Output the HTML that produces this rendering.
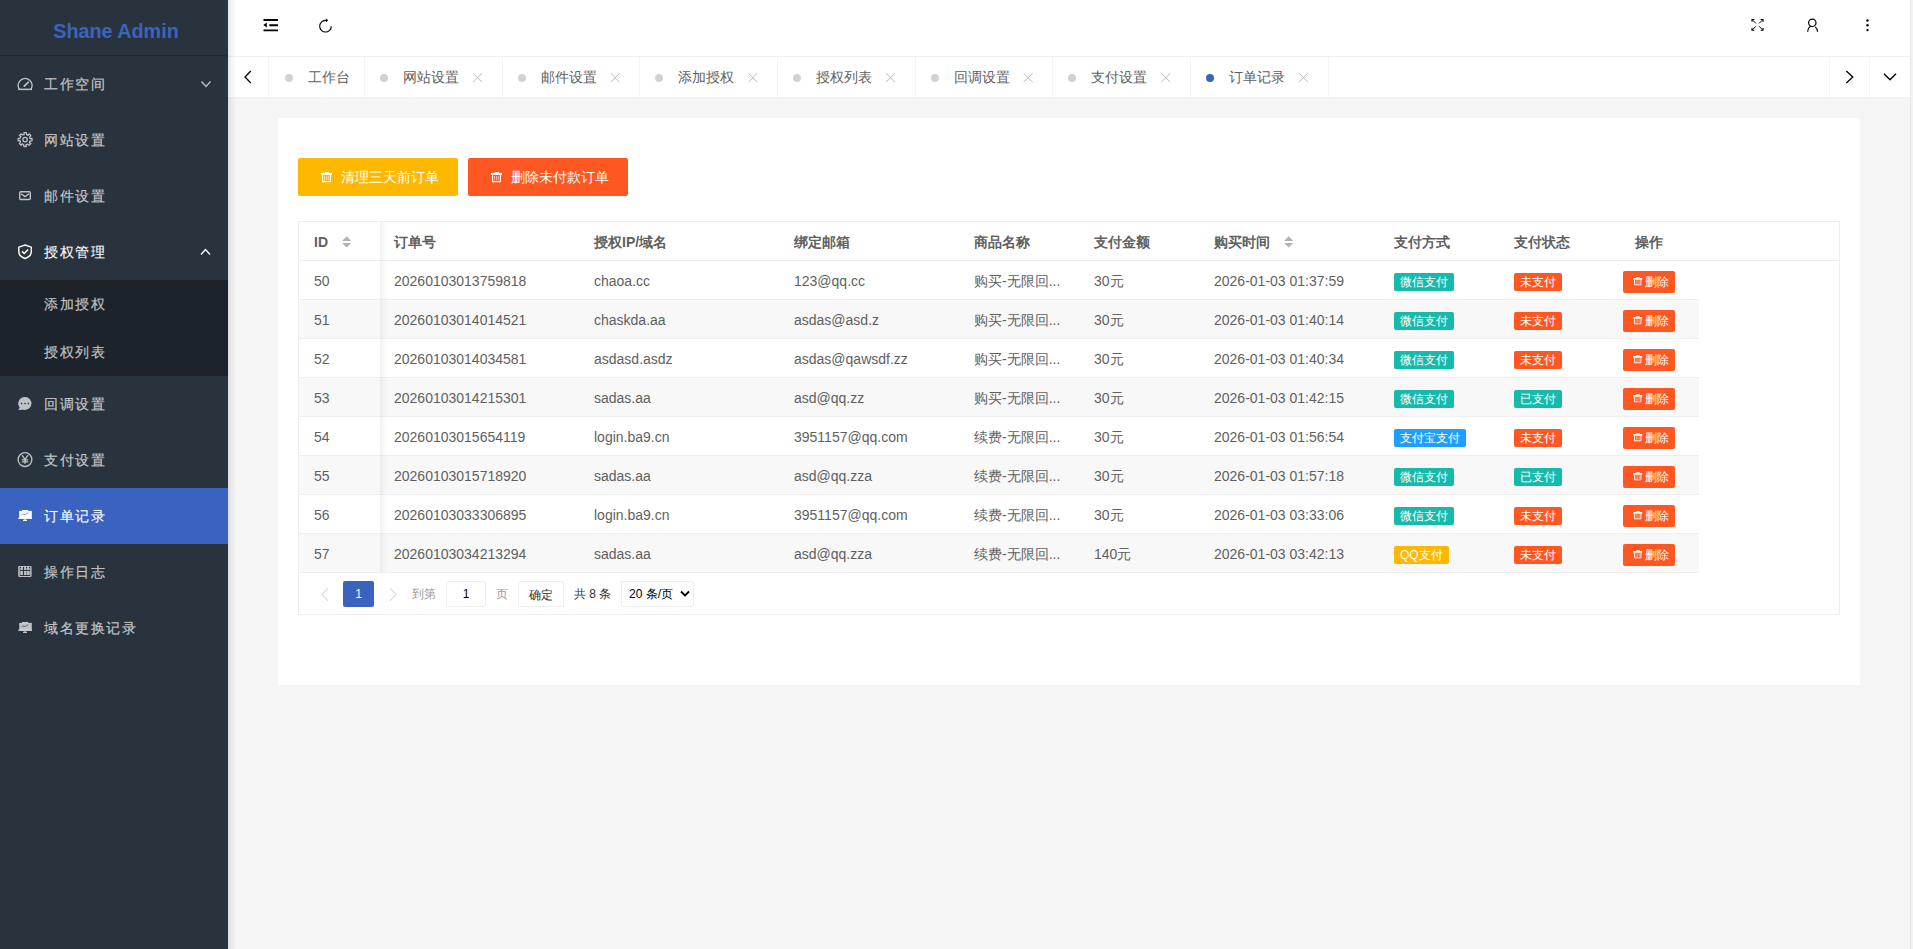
<!DOCTYPE html>
<html><head><meta charset="utf-8"><style>
*{box-sizing:border-box;margin:0;padding:0}
html,body{width:1913px;height:949px;overflow:hidden;background:#f5f5f5;font-family:"Liberation Sans",sans-serif;font-size:14px;color:#5f5f5f}
div,span{position:absolute;white-space:nowrap}
#side{left:0;top:0;width:228px;height:949px;background:#28333e}
#sshadow{left:228px;top:0;width:8px;height:949px;background:linear-gradient(to right,rgba(0,15,40,.10),rgba(0,15,40,.05) 40%,rgba(0,0,0,0));z-index:5}
#logo{left:2px;top:0;width:228px;height:56px;color:#3d63bf;font-weight:bold;font-size:21px;text-align:center;line-height:61px;transform:scaleX(.94)}
#logob{left:0;top:55px;width:228px;height:1px;background:#222b34}
.nav{left:0;width:228px;height:56px;color:rgba(255,255,255,.7);font-size:13.5px;letter-spacing:1.5px;line-height:58px;-webkit-text-stroke:.25px rgba(255,255,255,.45)}
.nav span{left:44px;top:0}
.sub{left:0;top:280px;width:228px;height:96px;background:#1c232a}
.sub div{left:44px;height:48px;line-height:50px;color:rgba(255,255,255,.7);font-size:13.5px;letter-spacing:1.5px;-webkit-text-stroke:.25px rgba(255,255,255,.45)}
#head{left:228px;top:0;width:1685px;height:57px;background:#fff;border-bottom:1px solid #f0f0f0}
#tabs{left:228px;top:57px;width:1685px;height:41px;background:#fff;border-bottom:1px solid #f0f0f0}
.tb{top:57px;width:1px;height:40px;background:#f4f4f4}
.tt{top:57px;line-height:41px;font-size:14px;color:#5f5f5f}
.dot{top:74px;width:8px;height:8px;border-radius:50%;background:#d2d2d2}
#card{left:278px;top:118px;width:1582px;height:567px;background:#fff}
.btn{top:158px;height:38px;width:160px;line-height:38px;color:#fff;font-size:14px;border-radius:2px}
.btn span{left:43px;top:0}
#tbl{left:298px;top:221px;width:1542px;height:394px;border:1px solid #eee;background:#fff}
.row{left:299px;width:1400px;height:39px;border-bottom:1px solid #eee}
.even{background:#f8f8f8}
.hb{left:299px;top:260px;width:1540px;height:1px;background:#eee}
.hd{top:223px;line-height:38px;font-weight:bold;color:#5f5f5f}
.c{top:0;line-height:40px}
.badge{top:12px;height:18px;line-height:18px;font-size:12px;color:#fff;border-radius:2px;padding:0 6px}
.del{top:10px;left:1324px;height:22px;width:52px;line-height:22px;font-size:12px;color:#fff;background:#ff5722;border-radius:2px}
.del span{left:22px;top:0}
#fshadow{left:380px;top:222px;width:7px;height:350px;background:linear-gradient(to right,rgba(0,0,0,.05),rgba(0,0,0,0));z-index:3}
.pg{font-size:12px;top:581px;line-height:26px}
#ov{left:0;top:0;z-index:10}
</style></head><body>
<div id="side"></div><div id="sshadow"></div>
<div id="logo">Shane Admin</div><div id="logob"></div>
<div class="nav" style="top:56px;color:rgba(255,255,255,.7)"><span>工作空间</span></div>
<div class="nav" style="top:112px;color:rgba(255,255,255,.7)"><span>网站设置</span></div>
<div class="nav" style="top:168px;color:rgba(255,255,255,.7)"><span>邮件设置</span></div>
<div class="nav" style="top:224px;color:#fff"><span>授权管理</span></div>
<div class="nav" style="top:376px;color:rgba(255,255,255,.7)"><span>回调设置</span></div>
<div class="nav" style="top:432px;color:rgba(255,255,255,.7)"><span>支付设置</span></div>
<div class="nav" style="top:488px;background:#3a62bf;color:#fff"><span>订单记录</span></div>
<div class="nav" style="top:544px;color:rgba(255,255,255,.7)"><span>操作日志</span></div>
<div class="nav" style="top:600px;color:rgba(255,255,255,.7)"><span>域名更换记录</span></div>
<div class="sub"><div style="top:0">添加授权</div><div style="top:48px">授权列表</div></div>
<div id="head"></div><div id="tabs"></div>
<div class="tb" style="left:268px"></div>
<div class="tb" style="left:364px"></div>
<div class="tb" style="left:502px"></div>
<div class="tb" style="left:639px"></div>
<div class="tb" style="left:777px"></div>
<div class="tb" style="left:915px"></div>
<div class="tb" style="left:1052px"></div>
<div class="tb" style="left:1190px"></div>
<div class="tb" style="left:1328px"></div>
<div class="tb" style="left:1829px"></div>
<div class="tb" style="left:1869px"></div>
<div class="dot" style="left:284.5px"></div>
<span class="tt" style="left:308px">工作台</span>
<div class="dot" style="left:380.00px;background:#d2d2d2"></div>
<span class="tt" style="left:403.10px">网站设置</span>
<div class="dot" style="left:517.65px;background:#d2d2d2"></div>
<span class="tt" style="left:540.75px">邮件设置</span>
<div class="dot" style="left:655.30px;background:#d2d2d2"></div>
<span class="tt" style="left:678.40px">添加授权</span>
<div class="dot" style="left:792.95px;background:#d2d2d2"></div>
<span class="tt" style="left:816.05px">授权列表</span>
<div class="dot" style="left:930.60px;background:#d2d2d2"></div>
<span class="tt" style="left:953.70px">回调设置</span>
<div class="dot" style="left:1068.25px;background:#d2d2d2"></div>
<span class="tt" style="left:1091.35px">支付设置</span>
<div class="dot" style="left:1205.90px;background:#3a62bf"></div>
<span class="tt" style="left:1229.00px">订单记录</span>
<div id="card"></div>
<div class="btn" style="left:298px;background:#ffb800"><span>清理三天前订单</span></div>
<div class="btn" style="left:468px;background:#ff5722"><span>删除未付款订单</span></div>
<div id="tbl"></div>
<span class="hd" style="left:314px">ID</span>
<span class="hd" style="left:394px">订单号</span>
<span class="hd" style="left:594px">授权IP/域名</span>
<span class="hd" style="left:794px">绑定邮箱</span>
<span class="hd" style="left:974px">商品名称</span>
<span class="hd" style="left:1094px">支付金额</span>
<span class="hd" style="left:1214px">购买时间</span>
<span class="hd" style="left:1394px">支付方式</span>
<span class="hd" style="left:1514px">支付状态</span>
<span class="hd" style="left:1635px">操作</span>
<div class="hb"></div>
<div class="row" style="top:261px">
<span class="c" style="left:15px">50</span>
<span class="c" style="left:95px">20260103013759818</span>
<span class="c" style="left:295px">chaoa.cc</span>
<span class="c" style="left:495px">123@qq.cc</span>
<span class="c" style="left:675px">购买-无限回...</span>
<span class="c" style="left:795px">30元</span>
<span class="c" style="left:915px">2026-01-03 01:37:59</span>
<span class="badge" style="left:1095px;background:#16baaa">微信支付</span>
<span class="badge" style="left:1215px;background:#ff5722">未支付</span>
<span class="del"><span>删除</span></span>
</div>
<div class="row even" style="top:300px">
<span class="c" style="left:15px">51</span>
<span class="c" style="left:95px">20260103014014521</span>
<span class="c" style="left:295px">chaskda.aa</span>
<span class="c" style="left:495px">asdas@asd.z</span>
<span class="c" style="left:675px">购买-无限回...</span>
<span class="c" style="left:795px">30元</span>
<span class="c" style="left:915px">2026-01-03 01:40:14</span>
<span class="badge" style="left:1095px;background:#16baaa">微信支付</span>
<span class="badge" style="left:1215px;background:#ff5722">未支付</span>
<span class="del"><span>删除</span></span>
</div>
<div class="row" style="top:339px">
<span class="c" style="left:15px">52</span>
<span class="c" style="left:95px">20260103014034581</span>
<span class="c" style="left:295px">asdasd.asdz</span>
<span class="c" style="left:495px">asdas@qawsdf.zz</span>
<span class="c" style="left:675px">购买-无限回...</span>
<span class="c" style="left:795px">30元</span>
<span class="c" style="left:915px">2026-01-03 01:40:34</span>
<span class="badge" style="left:1095px;background:#16baaa">微信支付</span>
<span class="badge" style="left:1215px;background:#ff5722">未支付</span>
<span class="del"><span>删除</span></span>
</div>
<div class="row even" style="top:378px">
<span class="c" style="left:15px">53</span>
<span class="c" style="left:95px">20260103014215301</span>
<span class="c" style="left:295px">sadas.aa</span>
<span class="c" style="left:495px">asd@qq.zz</span>
<span class="c" style="left:675px">购买-无限回...</span>
<span class="c" style="left:795px">30元</span>
<span class="c" style="left:915px">2026-01-03 01:42:15</span>
<span class="badge" style="left:1095px;background:#16baaa">微信支付</span>
<span class="badge" style="left:1215px;background:#16baaa">已支付</span>
<span class="del"><span>删除</span></span>
</div>
<div class="row" style="top:417px">
<span class="c" style="left:15px">54</span>
<span class="c" style="left:95px">20260103015654119</span>
<span class="c" style="left:295px">login.ba9.cn</span>
<span class="c" style="left:495px">3951157@qq.com</span>
<span class="c" style="left:675px">续费-无限回...</span>
<span class="c" style="left:795px">30元</span>
<span class="c" style="left:915px">2026-01-03 01:56:54</span>
<span class="badge" style="left:1095px;background:#1e9fff">支付宝支付</span>
<span class="badge" style="left:1215px;background:#ff5722">未支付</span>
<span class="del"><span>删除</span></span>
</div>
<div class="row even" style="top:456px">
<span class="c" style="left:15px">55</span>
<span class="c" style="left:95px">20260103015718920</span>
<span class="c" style="left:295px">sadas.aa</span>
<span class="c" style="left:495px">asd@qq.zza</span>
<span class="c" style="left:675px">续费-无限回...</span>
<span class="c" style="left:795px">30元</span>
<span class="c" style="left:915px">2026-01-03 01:57:18</span>
<span class="badge" style="left:1095px;background:#16baaa">微信支付</span>
<span class="badge" style="left:1215px;background:#16baaa">已支付</span>
<span class="del"><span>删除</span></span>
</div>
<div class="row" style="top:495px">
<span class="c" style="left:15px">56</span>
<span class="c" style="left:95px">20260103033306895</span>
<span class="c" style="left:295px">login.ba9.cn</span>
<span class="c" style="left:495px">3951157@qq.com</span>
<span class="c" style="left:675px">续费-无限回...</span>
<span class="c" style="left:795px">30元</span>
<span class="c" style="left:915px">2026-01-03 03:33:06</span>
<span class="badge" style="left:1095px;background:#16baaa">微信支付</span>
<span class="badge" style="left:1215px;background:#ff5722">未支付</span>
<span class="del"><span>删除</span></span>
</div>
<div class="row even" style="top:534px">
<span class="c" style="left:15px">57</span>
<span class="c" style="left:95px">20260103034213294</span>
<span class="c" style="left:295px">sadas.aa</span>
<span class="c" style="left:495px">asd@qq.zza</span>
<span class="c" style="left:675px">续费-无限回...</span>
<span class="c" style="left:795px">140元</span>
<span class="c" style="left:915px">2026-01-03 03:42:13</span>
<span class="badge" style="left:1095px;background:#ffb800">QQ支付</span>
<span class="badge" style="left:1215px;background:#ff5722">未支付</span>
<span class="del"><span>删除</span></span>
</div>
<div id="fshadow"></div>
<div style="left:343px;top:581px;width:31px;height:26px;background:#3a62bf;border-radius:2px;color:#fff;font-size:12px;text-align:center;line-height:26px">1</div>
<span class="pg" style="left:412px;color:#999">到第</span>
<div style="left:446px;top:581px;width:40px;height:26px;border:1px solid #eee;border-radius:2px;font-size:12px;text-align:center;line-height:24px;color:#000">1</div>
<span class="pg" style="left:496px;color:#999">页</span>
<div style="left:518px;top:581px;width:46px;height:26px;border:1px solid #eee;border-radius:2px;font-size:12px;text-align:center;line-height:26px;color:#333">确定</div>
<span class="pg" style="left:574px;color:#333">共 8 条</span>
<div style="left:621px;top:581px;width:73px;height:26px;border:1px solid #eee;border-radius:2px;font-size:12px;line-height:24px;color:#000;padding-left:7px">20 条/页</div>
<div style="left:1910px;top:0;width:1px;height:949px;background:#e8e8e8;z-index:12"></div><div style="left:1911px;top:0;width:2px;height:949px;background:#f3f3f3;z-index:12"></div>
<svg id="ov" width="1913" height="949" style="position:absolute;left:0;top:0;z-index:10"><path d="M19.3 89.2 A6.9 6.9 0 1 1 30.9 89.2" fill="none" stroke="rgba(255,255,255,.7)" stroke-width="1.5" /><path d="M18.2 88.6h13.8v1.5h-13.8z" fill="rgba(255,255,255,.7)" /><path d="M24.3 86.2L28.2 82.3" fill="none" stroke="rgba(255,255,255,.7)" stroke-width="1.7" stroke-linecap="round"/><path d="M23.92 132.70 L26.28 132.70 L26.64 134.63 L28.12 135.37 L29.14 133.88 L30.82 135.56 L29.70 137.17 L30.23 138.74 L32.00 138.42 L32.00 140.78 L30.07 141.14 L29.33 142.62 L30.82 143.64 L29.14 145.32 L27.53 144.20 L25.96 144.73 L26.28 146.50 L23.92 146.50 L23.56 144.57 L22.08 143.83 L21.06 145.32 L19.38 143.64 L20.50 142.03 L19.97 140.46 L18.20 140.78 L18.20 138.42 L20.13 138.06 L20.87 136.58 L19.38 135.56 L21.06 133.88 L22.67 135.00 L24.24 134.47Z" fill="none" stroke="rgba(255,255,255,.7)" stroke-width="1.3" stroke-linejoin="round"/><circle cx="25.1" cy="139.6" r="2.2" fill="none" stroke="rgba(255,255,255,.7)" stroke-width="1.3"/><rect x="19.7" y="191.7" width="10.6" height="7.8" rx="1" fill="none" stroke="rgba(255,255,255,.7)" stroke-width="1.4"/><path d="M21 193.7L25 196.6L29 193.7" fill="none" stroke="rgba(255,255,255,.7)" stroke-width="1.3" /><path d="M25.05 245L31.3 247.2V251.6C31.3 255 28.6 257.4 25.05 258.5C21.5 257.4 18.8 255 18.8 251.6V247.2z" fill="none" stroke="#fff" stroke-width="1.4" /><path d="M22 251.4L24.2 253.5L28.2 249.4" fill="none" stroke="#fff" stroke-width="1.5" /><path d="M25 397.1A6.6 6.4 0 1 1 23.2 409.7L18.2 410.1L19.8 407.6A6.6 6.4 0 0 1 25 397.1z" fill="rgba(255,255,255,.7)" /><circle cx="21.6" cy="403.6" r=".8" fill="#28333e"/><circle cx="25" cy="403.6" r=".8" fill="#28333e"/><circle cx="28.4" cy="403.6" r=".8" fill="#28333e"/><circle cx="25" cy="459.6" r="6.9" fill="none" stroke="rgba(255,255,255,.7)" stroke-width="1.3"/><path d="M22 455.2L25 459.4L28 455.2 M25 459.4V463.8 M21.8 459.8H28.2 M21.8 461.8H28.2" fill="none" stroke="rgba(255,255,255,.7)" stroke-width="1.3" /><path d="M22 510.0h6.2v1.2H22z" fill="#fff" /><path d="M19.2 510.9h12.6v7.6H19.2z" fill="#fff" /><path d="M18.1 517.6999999999999h13.9v1.1H18.1z" fill="#fff" /><path d="M24.4 518.6999999999999h1.2v1.2h-1.2z M23 519.6999999999999h4v1.2h-4z" fill="#fff" /><path d="M21.5 514.9L23 514.1L25 514.5L27 513.3L28.5 512.6999999999999" fill="none" stroke="#3a62bf" stroke-width="0.6" /><path d="M22 622.0h6.2v1.2H22z" fill="rgba(255,255,255,.7)" /><path d="M19.2 622.9h12.6v7.6H19.2z" fill="rgba(255,255,255,.7)" /><path d="M18.1 629.6999999999999h13.9v1.1H18.1z" fill="rgba(255,255,255,.7)" /><path d="M24.4 630.6999999999999h1.2v1.2h-1.2z M23 631.6999999999999h4v1.2h-4z" fill="rgba(255,255,255,.7)" /><path d="M21.5 626.9L23 626.1L25 626.5L27 625.3L28.5 624.6999999999999" fill="none" stroke="#28333e" stroke-width="0.6" /><rect x="18.2" y="565.9" width="13.4" height="11" rx="1.2" fill="rgba(255,255,255,.7)"/><path d="M23.5 567.2V575.9" fill="none" stroke="#28333e" stroke-width="1.1" /><path d="M20.1 567.4V575.2 M26.6 567.4V575.2 M29.8 567.4V575.2" fill="none" stroke="#28333e" stroke-width="0.8" opacity=".55"/><path d="M19.8 570.4H30.2 M19.8 575.5H30.2" fill="none" stroke="#28333e" stroke-width="1.0" /><circle cx="20.4" cy="567.5" r=".65" fill="#28333e"/><circle cx="23.5" cy="567.5" r=".65" fill="#28333e"/><circle cx="26.6" cy="567.5" r=".65" fill="#28333e"/><circle cx="29.6" cy="567.5" r=".65" fill="#28333e"/><path d="M201.5 81.5L206 86.5L210.5 81.5" fill="none" stroke="rgba(255,255,255,.7)" stroke-width="1.3" /><path d="M201 254.5L205.5 249.5L210 254.5" fill="none" stroke="#fff" stroke-width="1.3" /><path d="M263.5 20h14.5 M269.3 25.2h8.7 M263.5 30.4h14.5" fill="none" stroke="#000" stroke-width="1.9" /><path d="M263.3 25L266.8 22.6V27.4z" fill="#000" /><path d="M331.3 26.2A5.8 5.8 0 1 1 325.5 20.4L326.3 20.4" fill="none" stroke="#000" stroke-width="1.1" /><path d="M325.9 18.4L328.2 20.3L325.9 22.2z" fill="#000" /><path d="M1755.9 23.4L1752.3 19.8" fill="none" stroke="#000" stroke-width="1.0" /><path d="M1752 21.8V19.5H1754.3" fill="none" stroke="#000" stroke-width="1.1" /><path d="M1759.1 23.4L1762.7 19.8" fill="none" stroke="#000" stroke-width="1.0" /><path d="M1763 21.8V19.5H1760.7" fill="none" stroke="#000" stroke-width="1.1" /><path d="M1755.9 26.3L1752.3 29.9" fill="none" stroke="#000" stroke-width="1.0" /><path d="M1752 27.9V30.2H1754.3" fill="none" stroke="#000" stroke-width="1.1" /><path d="M1759.1 26.3L1762.7 29.9" fill="none" stroke="#000" stroke-width="1.0" /><path d="M1763 27.9V30.2H1760.7" fill="none" stroke="#000" stroke-width="1.1" /><circle cx="1812.3" cy="22.8" r="3.7" fill="none" stroke="#000" stroke-width="1.2"/><path d="M1807.6 31.8Q1807.9 28 1810.6 26" fill="none" stroke="#000" stroke-width="1.2" /><path d="M1815.2 26.9Q1817.4 28.6 1817.6 31.8" fill="none" stroke="#000" stroke-width="1.2" /><circle cx="1867.5" cy="20.5" r="1.2" fill="#000"/><circle cx="1867.5" cy="25.3" r="1.2" fill="#000"/><circle cx="1867.5" cy="30.1" r="1.2" fill="#000"/><path d="M250.8 71L245 77L250.8 83" fill="none" stroke="#000" stroke-width="1.3" /><path d="M1846.3 71L1852.8 77L1846.3 83" fill="none" stroke="#000" stroke-width="1.3" /><path d="M1884 73.8L1890 79.8L1896 73.8" fill="none" stroke="#000" stroke-width="1.3" /><path d="M473.05 73.2L482.05 82.2 M482.05 73.2L473.05 82.2" fill="none" stroke="#b8b8b8" stroke-width="1" /><path d="M610.70 73.2L619.70 82.2 M619.70 73.2L610.70 82.2" fill="none" stroke="#b8b8b8" stroke-width="1" /><path d="M748.35 73.2L757.35 82.2 M757.35 73.2L748.35 82.2" fill="none" stroke="#b8b8b8" stroke-width="1" /><path d="M886.00 73.2L895.00 82.2 M895.00 73.2L886.00 82.2" fill="none" stroke="#b8b8b8" stroke-width="1" /><path d="M1023.65 73.2L1032.65 82.2 M1032.65 73.2L1023.65 82.2" fill="none" stroke="#b8b8b8" stroke-width="1" /><path d="M1161.30 73.2L1170.30 82.2 M1170.30 73.2L1161.30 82.2" fill="none" stroke="#b8b8b8" stroke-width="1" /><path d="M1298.95 73.2L1307.95 82.2 M1307.95 73.2L1298.95 82.2" fill="none" stroke="#b8b8b8" stroke-width="1" /><path d="M321 172.89999999999998h11.0v2.1h-11.0z" fill="#fff" /><path d="M324.8 172.1h4.2v1.0h-4.2z" fill="#fff" /><path d="M322.6 175.0V181.6H330.4V175.0" fill="none" stroke="#fff" stroke-width="1.1" /><path d="M324.6 176.0V180.39999999999998 M326.5 176.0V180.39999999999998 M328.4 176.0V180.39999999999998" fill="none" stroke="#fff" stroke-width="0.7" opacity=".75"/><path d="M491 172.89999999999998h11.0v2.1h-11.0z" fill="#fff" /><path d="M494.8 172.1h4.2v1.0h-4.2z" fill="#fff" /><path d="M492.6 175.0V181.6H500.4V175.0" fill="none" stroke="#fff" stroke-width="1.1" /><path d="M494.6 176.0V180.39999999999998 M496.5 176.0V180.39999999999998 M498.4 176.0V180.39999999999998" fill="none" stroke="#fff" stroke-width="0.7" opacity=".75"/><path d="M346.7 236.3L351.3 240.9H342.1z M346.7 247.6L351.3 243.1H342.1z" fill="#b2b2b2" /><path d="M1288.7 236.3L1293.3 240.9H1284.1z M1288.7 247.6L1293.3 243.1H1284.1z" fill="#b2b2b2" /><path d="M1633.2 278.0h9.02v1.722h-9.02z" fill="#fff" /><path d="M1636.316 277.2h3.444v0.82h-3.444z" fill="#fff" /><path d="M1634.512 279.416V284.82800000000003H1640.9080000000001V279.416" fill="none" stroke="#fff" stroke-width="0.902" /><path d="M1636.152 280.236V283.844 M1637.71 280.236V283.844 M1639.268 280.236V283.844" fill="none" stroke="#fff" stroke-width="0.574" opacity=".75"/><path d="M1633.2 317.0h9.02v1.722h-9.02z" fill="#fff" /><path d="M1636.316 316.2h3.444v0.82h-3.444z" fill="#fff" /><path d="M1634.512 318.416V323.82800000000003H1640.9080000000001V318.416" fill="none" stroke="#fff" stroke-width="0.902" /><path d="M1636.152 319.236V322.844 M1637.71 319.236V322.844 M1639.268 319.236V322.844" fill="none" stroke="#fff" stroke-width="0.574" opacity=".75"/><path d="M1633.2 356.0h9.02v1.722h-9.02z" fill="#fff" /><path d="M1636.316 355.2h3.444v0.82h-3.444z" fill="#fff" /><path d="M1634.512 357.416V362.82800000000003H1640.9080000000001V357.416" fill="none" stroke="#fff" stroke-width="0.902" /><path d="M1636.152 358.236V361.844 M1637.71 358.236V361.844 M1639.268 358.236V361.844" fill="none" stroke="#fff" stroke-width="0.574" opacity=".75"/><path d="M1633.2 395.0h9.02v1.722h-9.02z" fill="#fff" /><path d="M1636.316 394.2h3.444v0.82h-3.444z" fill="#fff" /><path d="M1634.512 396.416V401.82800000000003H1640.9080000000001V396.416" fill="none" stroke="#fff" stroke-width="0.902" /><path d="M1636.152 397.236V400.844 M1637.71 397.236V400.844 M1639.268 397.236V400.844" fill="none" stroke="#fff" stroke-width="0.574" opacity=".75"/><path d="M1633.2 434.0h9.02v1.722h-9.02z" fill="#fff" /><path d="M1636.316 433.2h3.444v0.82h-3.444z" fill="#fff" /><path d="M1634.512 435.416V440.82800000000003H1640.9080000000001V435.416" fill="none" stroke="#fff" stroke-width="0.902" /><path d="M1636.152 436.236V439.844 M1637.71 436.236V439.844 M1639.268 436.236V439.844" fill="none" stroke="#fff" stroke-width="0.574" opacity=".75"/><path d="M1633.2 473.0h9.02v1.722h-9.02z" fill="#fff" /><path d="M1636.316 472.2h3.444v0.82h-3.444z" fill="#fff" /><path d="M1634.512 474.416V479.82800000000003H1640.9080000000001V474.416" fill="none" stroke="#fff" stroke-width="0.902" /><path d="M1636.152 475.236V478.844 M1637.71 475.236V478.844 M1639.268 475.236V478.844" fill="none" stroke="#fff" stroke-width="0.574" opacity=".75"/><path d="M1633.2 512.0h9.02v1.722h-9.02z" fill="#fff" /><path d="M1636.316 511.2h3.444v0.82h-3.444z" fill="#fff" /><path d="M1634.512 513.416V518.828H1640.9080000000001V513.416" fill="none" stroke="#fff" stroke-width="0.902" /><path d="M1636.152 514.236V517.844 M1637.71 514.236V517.844 M1639.268 514.236V517.844" fill="none" stroke="#fff" stroke-width="0.574" opacity=".75"/><path d="M1633.2 551.0h9.02v1.722h-9.02z" fill="#fff" /><path d="M1636.316 550.1999999999999h3.444v0.82h-3.444z" fill="#fff" /><path d="M1634.512 552.4159999999999V557.828H1640.9080000000001V552.4159999999999" fill="none" stroke="#fff" stroke-width="0.902" /><path d="M1636.152 553.236V556.8439999999999 M1637.71 553.236V556.8439999999999 M1639.268 553.236V556.8439999999999" fill="none" stroke="#fff" stroke-width="0.574" opacity=".75"/><path d="M328 588.2L322 594.5L328 600.8" fill="none" stroke="#c8c8c8" stroke-width="1" /><path d="M390 588.2L396 594.5L390 600.8" fill="none" stroke="#c8c8c8" stroke-width="1" /><path d="M681 591.5L685 595.5L689 591.5" fill="none" stroke="#000" stroke-width="1.8" /></svg>
</body></html>
